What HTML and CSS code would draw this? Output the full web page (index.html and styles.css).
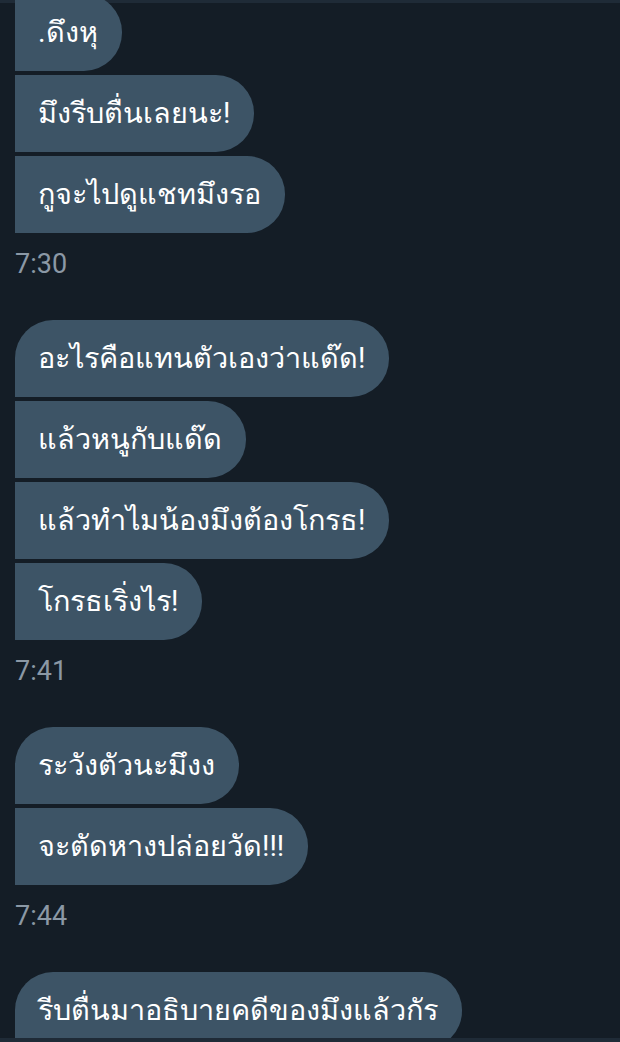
FILE: index.html
```html
<!DOCTYPE html>
<html lang="th">

<head>
    <meta charset="UTF-8">
    <meta name="viewport" content="width=device-width, initial-scale=1.0">
    <title>แชท</title>
    <link rel="stylesheet" href="styles.css">
</head>

<body>
    <div class="top-bar"></div>
    <div class="chat">
        <div class="group first">
            <div class="bubble start">.ดึงหุ</div>
            <div class="bubble">มึงรีบตื่นเลยนะ!</div>
            <div class="bubble end">กูจะไปดูแชทมึงรอ</div>
            <div class="time">7:30</div>
        </div>

        <div class="group">
            <div class="bubble start">อะไรคือแทนตัวเองว่าแด๊ด!</div>
            <div class="bubble">แล้วหนูกับแด๊ด</div>
            <div class="bubble">แล้วทำไมน้องมึงต้องโกรธ!</div>
            <div class="bubble end">โกรธเริ่งไร!</div>
            <div class="time">7:41</div>
        </div>

        <div class="group">
            <div class="bubble start">ระวังตัวนะมึงง</div>
            <div class="bubble end">จะตัดหางปล่อยวัด!!!</div>
            <div class="time">7:44</div>
        </div>

        <div class="group">
            <div class="bubble start">รีบตื่นมาอธิบายคดีของมึงแล้วกัร</div>
        </div>
    </div>
    <div class="bottom-bar"></div>
</body>

</html>
```

FILE: styles.css
```css
html,
body {
    height: 100%;
}

body {
    margin: 0;
    padding: 0;
    background-color: #141d26;
    /* Roboto for latin, thai falls back to the looped system face */
    font-family: Roboto, sans-serif;
    color: #ffffff;
    overflow: hidden;
    position: relative;
}

.top-bar {
    height: 3px;
    background-color: #1f2b37;
}

.chat {
    padding: 0 15px;
    margin-top: -9px;
}

.group {
    display: flex;
    flex-direction: column;
    align-items: flex-start;
    gap: 4px;
    margin-bottom: 41px;
}

.bubble {
    box-sizing: border-box;
    height: 77px;
    line-height: 77px;
    padding: 0 24px 0 23px;
    background-color: #3d5466;
    border-radius: 0 38px 38px 0;
    font-size: 28.8px;
    white-space: nowrap;
}

.bubble.start {
    border-top-left-radius: 38px;
}

.first .bubble.start {
    border-top-left-radius: 0;
}

.time {
    margin-top: 12px;
    height: 30px;
    line-height: 30px;
    font-size: 27px;
    color: #8b98a5;
}

.bottom-bar {
    position: absolute;
    left: 0;
    right: 0;
    bottom: 0;
    height: 4px;
    background-color: #1f2b37;
}
```
